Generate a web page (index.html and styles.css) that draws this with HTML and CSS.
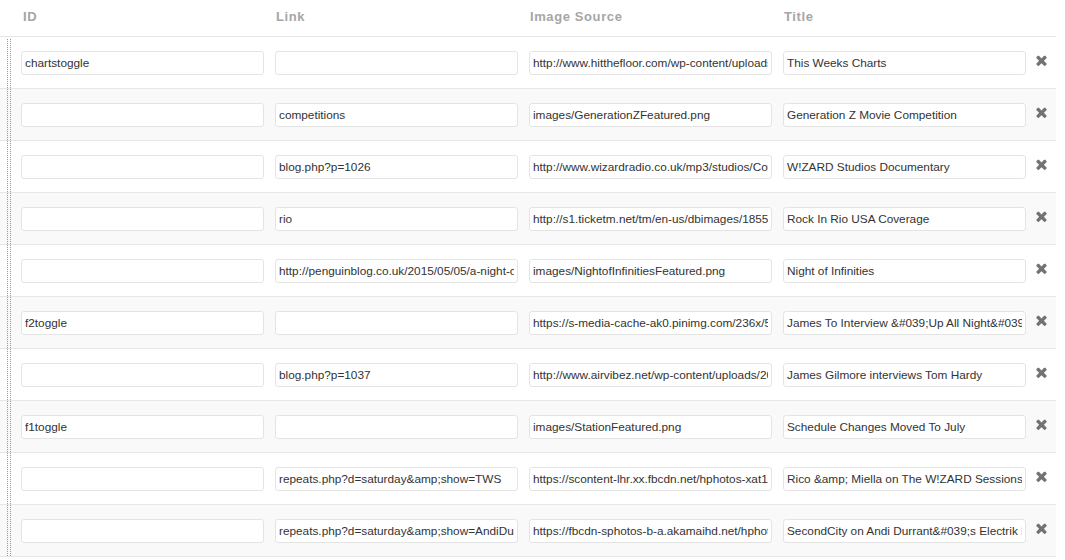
FILE: index.html
```html
<!DOCTYPE html>
<html lang="en">
<head>
    <meta charset="UTF-8">
    <title>Slides</title>
    <link rel="stylesheet" href="styles.css">
</head>
<body>
    <table class="slides">
        <colgroup>
            <col class="col-id">
            <col class="col-link">
            <col class="col-image">
            <col class="col-title">
            <col class="col-remove">
        </colgroup>
        <thead>
            <tr>
                <th>ID</th>
                <th>Link</th>
                <th>Image Source</th>
                <th>Title</th>
                <th></th>
            </tr>
        </thead>
        <tbody>
            <tr>
                <td><input type="text" value="chartstoggle"></td>
                <td><input type="text" value=""></td>
                <td><input type="text" value="http://www.hitthefloor.com/wp-content/uploads/2015/06/charts.jpg"></td>
                <td><input type="text" value="This Weeks Charts"></td>
                <td><a class="remove" href="#"><svg viewBox="110 294 1188 1260"><path d="M1298 1322q0 40-28 68l-136 136q-28 28-68 28t-68-28l-294-294-294 294q-28 28-68 28t-68-28l-136-136q-28-28-28-68t28-68l294-294-294-294q-28-28-28-68t28-68l136-136q28-28 68-28t68 28l294 294 294-294q28-28 68-28t68 28l136 136q28 28 28 68t-28 68l-294 294 294 294q28 28 28 68z"/></svg></a></td>
            </tr>
            <tr>
                <td><input type="text" value=""></td>
                <td><input type="text" value="competitions"></td>
                <td><input type="text" value="images/GenerationZFeatured.png"></td>
                <td><input type="text" value="Generation Z Movie Competition"></td>
                <td><a class="remove" href="#"><svg viewBox="110 294 1188 1260"><path d="M1298 1322q0 40-28 68l-136 136q-28 28-68 28t-68-28l-294-294-294 294q-28 28-68 28t-68-28l-136-136q-28-28-28-68t28-68l294-294-294-294q-28-28-28-68t28-68l136-136q28-28 68-28t68 28l294 294 294-294q28-28 68-28t68 28l136 136q28 28 28 68t-28 68l-294 294 294 294q28 28 28 68z"/></svg></a></td>
            </tr>
            <tr>
                <td><input type="text" value=""></td>
                <td><input type="text" value="blog.php?p=1026"></td>
                <td><input type="text" value="http://www.wizardradio.co.uk/mp3/studios/Cover.png"></td>
                <td><input type="text" value="W!ZARD Studios Documentary"></td>
                <td><a class="remove" href="#"><svg viewBox="110 294 1188 1260"><path d="M1298 1322q0 40-28 68l-136 136q-28 28-68 28t-68-28l-294-294-294 294q-28 28-68 28t-68-28l-136-136q-28-28-28-68t28-68l294-294-294-294q-28-28-28-68t28-68l136-136q28-28 68-28t68 28l294 294 294-294q28-28 68-28t68 28l136 136q28 28 28 68t-28 68l-294 294 294 294q28 28 28 68z"/></svg></a></td>
            </tr>
            <tr>
                <td><input type="text" value=""></td>
                <td><input type="text" value="rio"></td>
                <td><input type="text" value="http://s1.ticketm.net/tm/en-us/dbimages/185521a.jpg"></td>
                <td><input type="text" value="Rock In Rio USA Coverage"></td>
                <td><a class="remove" href="#"><svg viewBox="110 294 1188 1260"><path d="M1298 1322q0 40-28 68l-136 136q-28 28-68 28t-68-28l-294-294-294 294q-28 28-68 28t-68-28l-136-136q-28-28-28-68t28-68l294-294-294-294q-28-28-28-68t28-68l136-136q28-28 68-28t68 28l294 294 294-294q28-28 68-28t68 28l136 136q28 28 28 68t-28 68l-294 294 294 294q28 28 28 68z"/></svg></a></td>
            </tr>
            <tr>
                <td><input type="text" value=""></td>
                <td><input type="text" value="http://penguinblog.co.uk/2015/05/05/a-night-of-infinities/"></td>
                <td><input type="text" value="images/NightofInfinitiesFeatured.png"></td>
                <td><input type="text" value="Night of Infinities"></td>
                <td><a class="remove" href="#"><svg viewBox="110 294 1188 1260"><path d="M1298 1322q0 40-28 68l-136 136q-28 28-68 28t-68-28l-294-294-294 294q-28 28-68 28t-68-28l-136-136q-28-28-28-68t28-68l294-294-294-294q-28-28-28-68t28-68l136-136q28-28 68-28t68 28l294 294 294-294q28-28 68-28t68 28l136 136q28 28 28 68t-28 68l-294 294 294 294q28 28 28 68z"/></svg></a></td>
            </tr>
            <tr>
                <td><input type="text" value="f2toggle"></td>
                <td><input type="text" value=""></td>
                <td><input type="text" value="https://s-media-cache-ak0.pinimg.com/236x/5a/2b/7c/up-all-night.jpg"></td>
                <td><input type="text" value="James To Interview &amp;#039;Up All Night&amp;#039; Cast"></td>
                <td><a class="remove" href="#"><svg viewBox="110 294 1188 1260"><path d="M1298 1322q0 40-28 68l-136 136q-28 28-68 28t-68-28l-294-294-294 294q-28 28-68 28t-68-28l-136-136q-28-28-28-68t28-68l294-294-294-294q-28-28-28-68t28-68l136-136q28-28 68-28t68 28l294 294 294-294q28-28 68-28t68 28l136 136q28 28 28 68t-28 68l-294 294 294 294q28 28 28 68z"/></svg></a></td>
            </tr>
            <tr>
                <td><input type="text" value=""></td>
                <td><input type="text" value="blog.php?p=1037"></td>
                <td><input type="text" value="http://www.airvibez.net/wp-content/uploads/2015/tom-hardy.jpg"></td>
                <td><input type="text" value="James Gilmore interviews Tom Hardy"></td>
                <td><a class="remove" href="#"><svg viewBox="110 294 1188 1260"><path d="M1298 1322q0 40-28 68l-136 136q-28 28-68 28t-68-28l-294-294-294 294q-28 28-68 28t-68-28l-136-136q-28-28-28-68t28-68l294-294-294-294q-28-28-28-68t28-68l136-136q28-28 68-28t68 28l294 294 294-294q28-28 68-28t68 28l136 136q28 28 28 68t-28 68l-294 294 294 294q28 28 28 68z"/></svg></a></td>
            </tr>
            <tr>
                <td><input type="text" value="f1toggle"></td>
                <td><input type="text" value=""></td>
                <td><input type="text" value="images/StationFeatured.png"></td>
                <td><input type="text" value="Schedule Changes Moved To July"></td>
                <td><a class="remove" href="#"><svg viewBox="110 294 1188 1260"><path d="M1298 1322q0 40-28 68l-136 136q-28 28-68 28t-68-28l-294-294-294 294q-28 28-68 28t-68-28l-136-136q-28-28-28-68t28-68l294-294-294-294q-28-28-28-68t28-68l136-136q28-28 68-28t68 28l294 294 294-294q28-28 68-28t68 28l136 136q28 28 28 68t-28 68l-294 294 294 294q28 28 28 68z"/></svg></a></td>
            </tr>
            <tr>
                <td><input type="text" value=""></td>
                <td><input type="text" value="repeats.php?d=saturday&amp;amp;show=TWS"></td>
                <td><input type="text" value="https://scontent-lhr.xx.fbcdn.net/hphotos-xat1/t31.0-8/sessions.jpg"></td>
                <td><input type="text" value="Rico &amp;amp; Miella on The W!ZARD Sessions"></td>
                <td><a class="remove" href="#"><svg viewBox="110 294 1188 1260"><path d="M1298 1322q0 40-28 68l-136 136q-28 28-68 28t-68-28l-294-294-294 294q-28 28-68 28t-68-28l-136-136q-28-28-28-68t28-68l294-294-294-294q-28-28-28-68t28-68l136-136q28-28 68-28t68 28l294 294 294-294q28-28 68-28t68 28l136 136q28 28 28 68t-28 68l-294 294 294 294q28 28 28 68z"/></svg></a></td>
            </tr>
            <tr>
                <td><input type="text" value=""></td>
                <td><input type="text" value="repeats.php?d=saturday&amp;amp;show=AndiDurrant"></td>
                <td><input type="text" value="https://fbcdn-sphotos-b-a.akamaihd.net/hphotos-ak-xpf1/secondcity.jpg"></td>
                <td><input type="text" value="SecondCity on Andi Durrant&amp;#039;s Electrik Playground"></td>
                <td><a class="remove" href="#"><svg viewBox="110 294 1188 1260"><path d="M1298 1322q0 40-28 68l-136 136q-28 28-68 28t-68-28l-294-294-294 294q-28 28-68 28t-68-28l-136-136q-28-28-28-68t28-68l294-294-294-294q-28-28-28-68t28-68l136-136q28-28 68-28t68 28l294 294 294-294q28-28 68-28t68 28l136 136q28 28 28 68t-28 68l-294 294 294 294q28 28 28 68z"/></svg></a></td>
            </tr>
        </tbody>
    </table>
</body>
</html>
```

FILE: styles.css
```css
:root {
    --border: #e6e6e6;
    --stripe: #f9f9f9;
    --grip: #999;
    --text: #333;
}

body {
    font-family: "Liberation Sans", Arial, sans-serif;
    color: var(--text);
    background: white;
    margin: 0;
}

.slides {
    border-collapse: collapse;
    table-layout: fixed;
    width: 1056px;
}

.col-id { width: 269px; }
.col-link,
.col-image,
.col-title { width: 254px; }
.col-remove { width: 25px; }

.slides th {
    text-align: left;
    font-size: 13px;
    line-height: 16px;
    font-weight: bold;
    letter-spacing: 0.6px;
    color: #a6a6a6;
    padding: 9px 0 11px 7px;
    border-bottom: 1px solid var(--border);
}

.slides th:first-child {
    padding-left: 23px;
}

.slides td {
    padding: 14px 5px 13px 6px;
    border-top: 1px solid var(--border);
    border-bottom: 1px solid var(--border);
    vertical-align: top;
}

.slides tbody tr:nth-child(even) td {
    background-color: var(--stripe);
}

/* drag handle */
.slides td:first-child {
    padding-left: 21px;
    background-image:
        repeating-linear-gradient(to bottom, var(--grip) 0 1px, transparent 1px 2px),
        repeating-linear-gradient(to bottom, var(--grip) 0 1px, transparent 1px 2px);
    background-position: 7px 0, 10px 0;
    background-size: 1px 100%, 1px 100%;
    background-repeat: no-repeat;
}

.slides tbody tr:first-child td:first-child {
    background-position: 7px 2px, 10px 2px;
}

.slides td:last-child {
    padding-left: 5px;
    padding-right: 0;
}

input {
    display: block;
    box-sizing: border-box;
    width: 243px;
    height: 24px;
    padding: 0 3px;
    border: 1px solid #e4e4e4;
    border-radius: 3px;
    background: white;
    font-family: "Liberation Sans", Arial, sans-serif;
    font-size: 11.8px;
    color: var(--text);
    outline: none;
}

.remove {
    display: block;
    width: 11px;
    height: 11px;
    margin-top: 4px;
}

.remove svg {
    display: block;
    width: 11px;
    height: 11px;
    fill: #727272;
}
```
